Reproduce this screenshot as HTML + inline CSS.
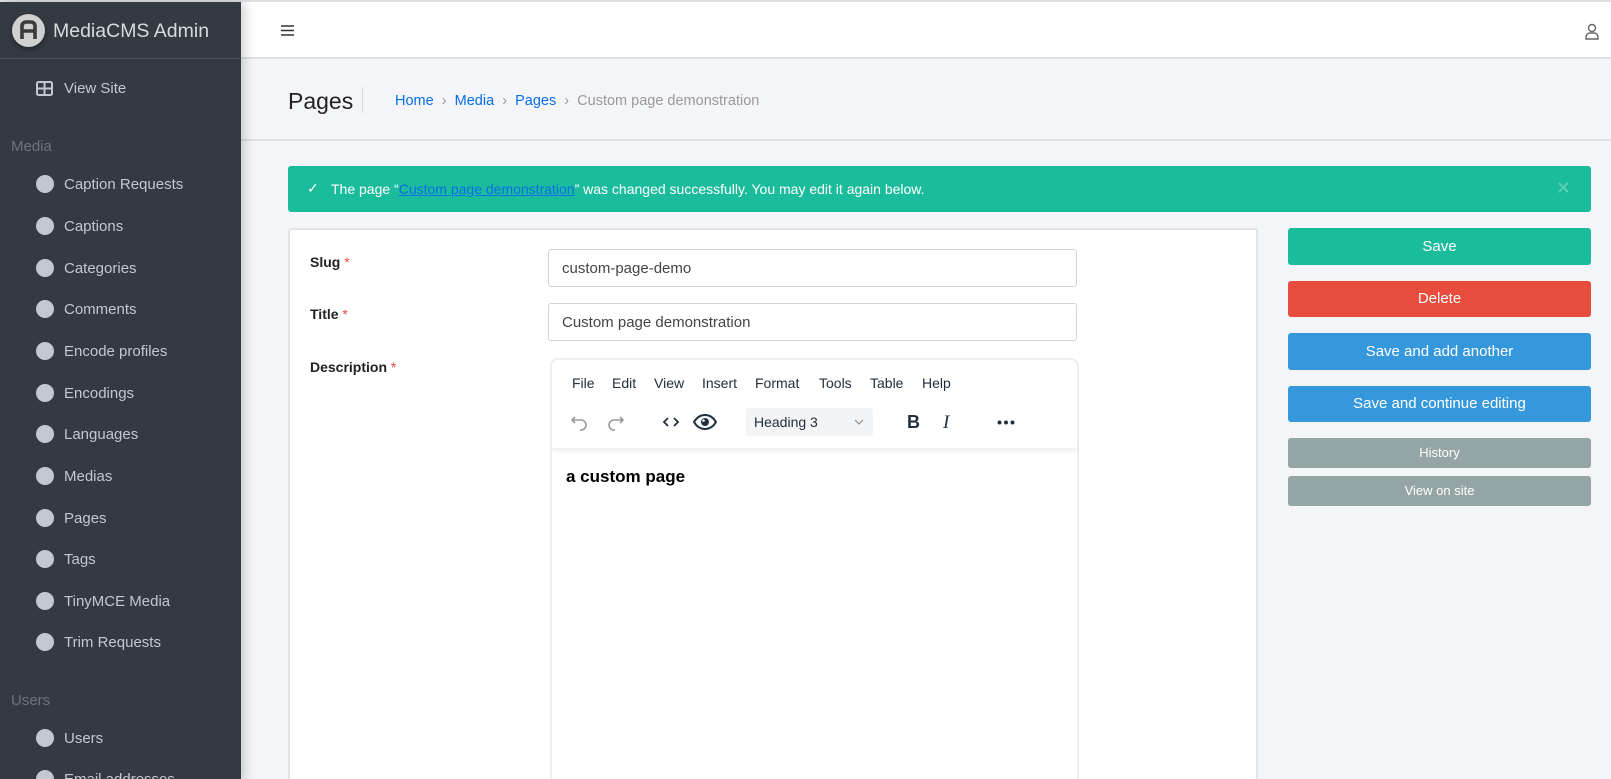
<!DOCTYPE html>
<html style="height:779px;overflow:hidden"><head><meta charset="utf-8">
<style>
*{box-sizing:border-box;margin:0;padding:0}
body{width:1611px;height:779px;overflow:hidden;background:#f4f5f8;font-family:"Liberation Sans",sans-serif;position:relative;border-top:2px solid #dee0e3}
.side{position:absolute;left:0;top:0;width:241px;height:779px;background:#343a42;box-shadow:4px 0 10px rgba(0,0,0,.18);z-index:2;overflow:hidden}
.brand{height:57px;border-bottom:1px solid #4b5159}
.logo{position:absolute;left:12px;top:12px;width:33px;height:33px;border-radius:50%;background:#d0d0d0;box-shadow:0 2px 4px rgba(0,0,0,.4)}
.it{position:absolute;left:36px;font-size:15px;color:#c2c7d0;display:flex;align-items:center}
.it i{display:inline-block;width:18px;height:18px;border-radius:50%;background:#c2c7d0;margin-right:10px}
.hd{position:absolute;left:11px;font-size:15px;color:#6c737a}
.top{position:absolute;left:241px;top:0;right:0;height:57px;background:#fff;border-bottom:2px solid #dee0e3}
.ph{position:absolute;left:241px;top:57px;right:0;height:82px;border-bottom:2px solid #dee0e3}
.alert{position:absolute;left:288px;top:164px;width:1303px;height:46px;background:#1bbc9b;border-radius:3px;color:#fff;font-size:14px}
.card{position:absolute;left:288px;top:226px;width:970px;height:553px;background:#fff;border:2px solid #e2e3e6;border-bottom:0;border-radius:3px 3px 0 0;overflow:hidden}
.lbl{position:absolute;left:20px;font-size:14px;font-weight:bold;color:#222}
.lbl b{color:#e74c3c;font-weight:normal}
.inp{position:absolute;left:258px;width:529px;height:38px;border:1px solid #ced4da;border-radius:3px;font-size:15px;color:#444;padding:10px 13px}
.btn{position:absolute;left:1288px;width:303px;border-radius:3px;color:#fff;text-align:center;font-size:15px}
.ed{position:absolute;left:260px;top:128px;width:529px;height:425px;border:2px solid #eee;border-bottom:0;border-radius:8px 8px 0 0}
.menu{position:absolute;top:15px;font-size:14px;color:#222f3e}
</style></head><body>
<div class="side">
 <div class="brand"></div>
 <div class="logo"><svg width="33" height="33" viewBox="0 0 33 33"><path d="M10 25V12a4 4 0 0 1 4-4h5a4 4 0 0 1 4 4v13M10 17h13" stroke="#3a3a3a" stroke-width="3.6" fill="none"/></svg></div>
 <span style="position:absolute;left:53px;top:18px;font-size:19.5px;color:#d8dadc">MediaCMS Admin</span>
 <div class="it" style="top:78px"><svg width="17" height="15" viewBox="0 0 17 15" style="margin-right:11px"><rect x="1" y="1" width="15" height="13" rx="1.5" fill="none" stroke="#c2c7d0" stroke-width="2"/><path d="M8.5 1v13M1 7.5h15" stroke="#c2c7d0" stroke-width="2"/></svg>View Site</div>
 <div class="hd" style="top:136px">Media</div>
 <div class="it" style="top:173px"><i></i>Caption Requests</div>
 <div class="it" style="top:215px"><i></i>Captions</div>
 <div class="it" style="top:257px"><i></i>Categories</div>
 <div class="it" style="top:298px"><i></i>Comments</div>
 <div class="it" style="top:340px"><i></i>Encode profiles</div>
 <div class="it" style="top:382px"><i></i>Encodings</div>
 <div class="it" style="top:423px"><i></i>Languages</div>
 <div class="it" style="top:465px"><i></i>Medias</div>
 <div class="it" style="top:507px"><i></i>Pages</div>
 <div class="it" style="top:548px"><i></i>Tags</div>
 <div class="it" style="top:590px"><i></i>TinyMCE Media</div>
 <div class="it" style="top:631px"><i></i>Trim Requests</div>
 <div class="hd" style="top:690px">Users</div>
 <div class="it" style="top:727px"><i></i>Users</div>
 <div style="position:absolute;left:0;top:768px;width:241px;height:11px;overflow:hidden"><div class="it" style="top:0"><i></i>Email addresses</div></div>
</div>
<div class="top">
 <svg style="position:absolute;left:40px;top:23px" width="13" height="11" viewBox="0 0 13 11"><path d="M0 1h13M0 5.5h13M0 10h13" stroke="#333" stroke-width="1.5"/></svg>
 <svg style="position:absolute;right:12px;top:21px" width="14" height="17" viewBox="0 0 14 17"><circle cx="7" cy="5" r="3.5" fill="none" stroke="#666" stroke-width="1.4"/><path d="M1 16v-2a4 4 0 0 1 4-4h4a4 4 0 0 1 4 4v2z" fill="none" stroke="#666" stroke-width="1.4"/></svg>
</div>
<div class="ph">
 <div style="position:absolute;left:47px;top:29px;font-size:23px;color:#222">Pages</div>
 <div style="position:absolute;left:121px;top:28px;width:1px;height:26px;background:#d8d8d8"></div>
 <div style="position:absolute;left:154px;top:34px;font-size:14.5px;color:#999"><span style="color:#0a6ee8">Home</span> &nbsp;›&nbsp; <span style="color:#0a6ee8">Media</span> &nbsp;›&nbsp; <span style="color:#0a6ee8">Pages</span> &nbsp;›&nbsp; Custom page demonstration</div>
</div>
<div class="alert">
 <span style="position:absolute;left:19px;top:14px;font-size:14px">✓</span>
 <span style="position:absolute;left:43px;top:15px">The page “<u style="color:#0a6ee8">Custom page demonstration</u>” was changed successfully. You may edit it again below.</span>
 <span style="position:absolute;right:20px;top:12px;font-size:18px;color:#5fd2ba">✕</span>
</div>
<div class="card">
 <div class="lbl" style="top:24px">Slug <b>*</b></div>
 <div class="lbl" style="top:76px">Title <b>*</b></div>
 <div class="lbl" style="top:129px">Description <b>*</b></div>
 <div class="inp" style="top:19px">custom-page-demo</div>
 <div class="inp" style="top:73px">Custom page demonstration</div>
 <div class="ed">
  <div class="menu" style="left:20px">File</div><div class="menu" style="left:60px">Edit</div><div class="menu" style="left:102px">View</div><div class="menu" style="left:150px">Insert</div><div class="menu" style="left:203px">Format</div><div class="menu" style="left:267px">Tools</div><div class="menu" style="left:318px">Table</div><div class="menu" style="left:370px">Help</div>
  <svg style="position:absolute;left:18px;top:53px" width="20" height="20" viewBox="0 0 20 20"><path d="M5 4L2 7l3 3M2 7h9a5 5 0 0 1 0 10h-1" fill="none" stroke="#999" stroke-width="1.6"/></svg>
  <svg style="position:absolute;left:53px;top:53px" width="20" height="20" viewBox="0 0 20 20"><path d="M15 4l3 3-3 3M18 7H9a5 5 0 0 0 0 10h1" fill="none" stroke="#999" stroke-width="1.6"/></svg>
  <svg style="position:absolute;left:110px;top:55px" width="18" height="14" viewBox="0 0 18 14"><path d="M6 3L2 7l4 4M12 3l4 4-4 4" fill="none" stroke="#222f3e" stroke-width="1.8"/></svg>
  <svg style="position:absolute;left:141px;top:53px" width="24" height="18" viewBox="0 0 24 18"><path d="M1 9c3-5 7-7 11-7s8 2 11 7c-3 5-7 7-11 7S4 14 1 9z" fill="none" stroke="#222f3e" stroke-width="2"/><circle cx="12" cy="9" r="4" fill="#222f3e"/><circle cx="10.5" cy="7.5" r="1.3" fill="#fff"/></svg>
  <div style="position:absolute;left:194px;top:48px;width:127px;height:28px;background:#f3f4f5;border-radius:3px;font-size:14px;color:#222f3e;padding:6px 8px">Heading 3<svg style="position:absolute;right:9px;top:11px" width="10" height="6" viewBox="0 0 10 6"><path d="M1 1l4 4 4-4" fill="none" stroke="#999" stroke-width="1.3"/></svg></div>
  <div style="position:absolute;left:355px;top:52px;font-size:18px;font-weight:bold;color:#222f3e">B</div>
  <div style="position:absolute;left:391px;top:52px;font-size:19px;font-style:italic;font-family:'Liberation Serif',serif;color:#222f3e">I</div>
  <svg style="position:absolute;left:445px;top:60px" width="18" height="5" viewBox="0 0 18 5"><circle cx="2.5" cy="2.5" r="2" fill="#222f3e"/><circle cx="9" cy="2.5" r="2" fill="#222f3e"/><circle cx="15.5" cy="2.5" r="2" fill="#222f3e"/></svg>
  <div style="position:absolute;left:0;right:0;top:86px;height:3px;box-shadow:0 2px 4px rgba(0,0,0,.08);border-bottom:1px solid #f0f0f0"></div>
  <div style="position:absolute;left:14px;top:107px;font-size:17px;font-weight:bold;color:#000">a custom page</div>
 </div>
</div>
<div class="btn" style="top:226px;height:37px;line-height:37px;background:#1bbc9b">Save</div>
<div class="btn" style="top:279px;height:36px;line-height:36px;background:#e74c3c">Delete</div>
<div class="btn" style="top:331px;height:37px;line-height:37px;background:#3598dc">Save and add another</div>
<div class="btn" style="top:384px;height:36px;line-height:36px;background:#3598dc">Save and continue editing</div>
<div class="btn" style="top:436px;height:30px;line-height:30px;background:#95a5a6;font-size:13px">History</div>
<div class="btn" style="top:474px;height:30px;line-height:30px;background:#95a5a6;font-size:13px">View on site</div>
</body></html>
